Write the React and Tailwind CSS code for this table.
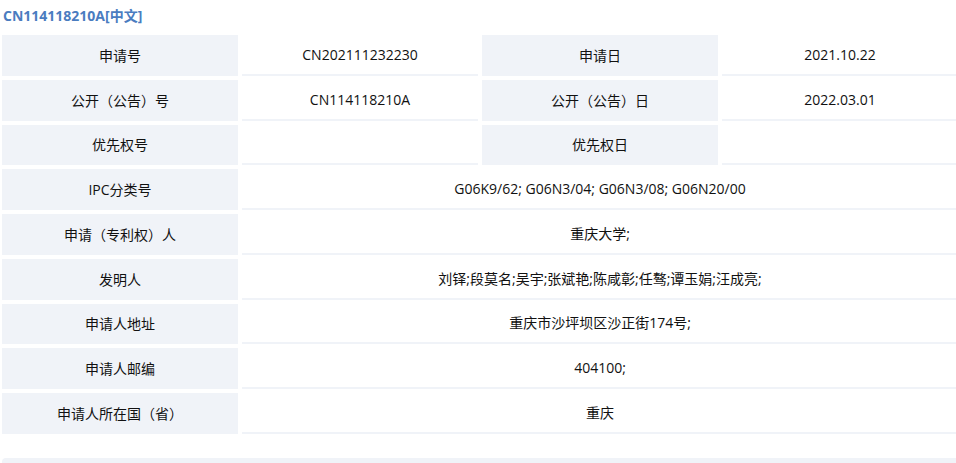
import React from 'react';

const rows = [
  [['申请号', 'CN202111232230'], ['申请日', '2021.10.22']],
  [['公开（公告）号', 'CN114118210A'], ['公开（公告）日', '2022.03.01']],
  [['优先权号', ''], ['优先权日', '']],
  [['IPC分类号', 'G06K9/62; G06N3/04; G06N3/08; G06N20/00']],
  [['申请（专利权）人', '重庆大学;']],
  [['发明人', '刘铎;段莫名;吴宇;张斌艳;陈咸彰;任骜;谭玉娟;汪成亮;']],
  [['申请人地址', '重庆市沙坪坝区沙正街174号;']],
  [['申请人邮编', '404100;']],
  [['申请人所在国（省）', '重庆']],
];

const font = { fontFamily: '"Open Sans", "Noto Sans CJK SC", sans-serif' };

function Label({ text }) {
  return <div className="flex items-center justify-center bg-[#f0f3f8]">{text}</div>;
}

function Value({ text, wide }) {
  return (
    <div className={`flex items-center justify-center border-b-2 border-[#f0f3f8] bg-white ${wide ? 'col-span-3' : ''}`}>
      {text}
    </div>
  );
}

export default function App() {
  return (
    <div className="w-[956px] h-[463px] overflow-hidden bg-white text-[14px] text-[#111]" style={font}>
      <div className="h-[31px] pl-[3px] flex items-center text-[14px] font-bold text-[#4a7cc0]">
        CN114118210A[中文]
      </div>
      <div className="pl-[2px] pt-[4px]">
        <div className="grid grid-cols-[236px_236px_236px_236px] auto-rows-[40.75px] gap-[4px] w-[956px]">
          {rows.map((row, i) =>
            row.length === 2 ? (
              <React.Fragment key={i}>
                <Label text={row[0][0]} />
                <Value text={row[0][1]} />
                <Label text={row[1][0]} />
                <Value text={row[1][1]} />
              </React.Fragment>
            ) : (
              <React.Fragment key={i}>
                <Label text={row[0][0]} />
                <Value text={row[0][1]} wide />
              </React.Fragment>
            )
          )}
        </div>
      </div>
      <div className="mt-[24px] ml-[2px] h-[20px] rounded-tl-[4px] bg-[#f0f3f8]" />
    </div>
  );
}
